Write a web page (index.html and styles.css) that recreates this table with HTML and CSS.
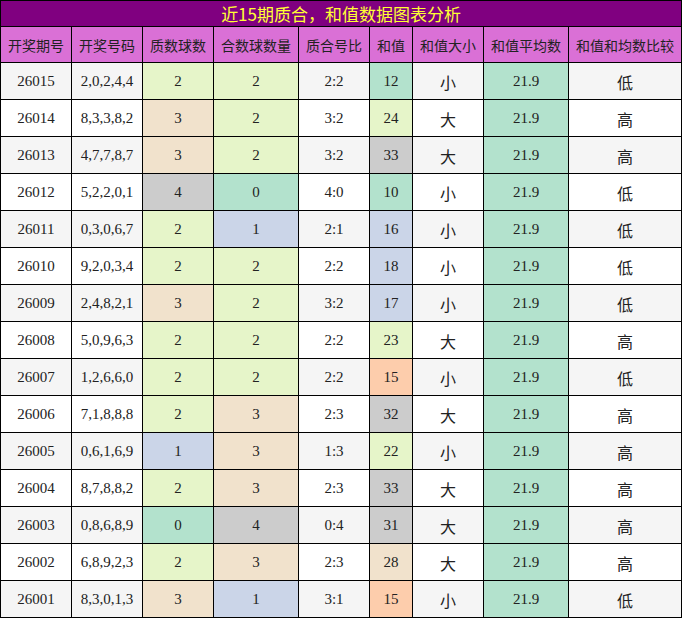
FILE: index.html
```html
<!DOCTYPE html>
<html lang="zh">
<head>
<meta charset="utf-8">
<link rel="stylesheet" href="styles.css">
</head>
<body>
<table class="tbl">
  <colgroup>
    <col class="w71"><col class="w71"><col class="w71"><col class="w85"><col class="w71"><col class="w43"><col class="w71"><col class="w85"><col class="w113">
  </colgroup>
  <thead>
    <tr class="title"><th colspan="9">近15期质合，和值数据图表分析</th></tr>
    <tr class="head">
      <th>开奖期号</th><th>开奖号码</th><th>质数球数</th><th>合数球数量</th><th>质合号比</th><th>和值</th><th>和值大小</th><th>和值平均数</th><th>和值和均数比较</th>
    </tr>
  </thead>
  <tbody>
    <tr class="odd"><td>26015</td><td>2,0,2,4,4</td><td class="c-green">2</td><td class="c-green">2</td><td>2:2</td><td class="c-mint">12</td><td class="cjk">小</td><td class="c-mint">21.9</td><td class="cjk">低</td></tr>
    <tr><td>26014</td><td>8,3,3,8,2</td><td class="c-tan">3</td><td class="c-green">2</td><td>3:2</td><td class="c-green">24</td><td class="cjk">大</td><td class="c-mint">21.9</td><td class="cjk">高</td></tr>
    <tr class="odd"><td>26013</td><td>4,7,7,8,7</td><td class="c-tan">3</td><td class="c-green">2</td><td>3:2</td><td class="c-gray">33</td><td class="cjk">大</td><td class="c-mint">21.9</td><td class="cjk">高</td></tr>
    <tr><td>26012</td><td>5,2,2,0,1</td><td class="c-gray">4</td><td class="c-mint">0</td><td>4:0</td><td class="c-mint">10</td><td class="cjk">小</td><td class="c-mint">21.9</td><td class="cjk">低</td></tr>
    <tr class="odd"><td>26011</td><td>0,3,0,6,7</td><td class="c-green">2</td><td class="c-blue">1</td><td>2:1</td><td class="c-blue">16</td><td class="cjk">小</td><td class="c-mint">21.9</td><td class="cjk">低</td></tr>
    <tr><td>26010</td><td>9,2,0,3,4</td><td class="c-green">2</td><td class="c-green">2</td><td>2:2</td><td class="c-blue">18</td><td class="cjk">小</td><td class="c-mint">21.9</td><td class="cjk">低</td></tr>
    <tr class="odd"><td>26009</td><td>2,4,8,2,1</td><td class="c-tan">3</td><td class="c-green">2</td><td>3:2</td><td class="c-blue">17</td><td class="cjk">小</td><td class="c-mint">21.9</td><td class="cjk">低</td></tr>
    <tr><td>26008</td><td>5,0,9,6,3</td><td class="c-green">2</td><td class="c-green">2</td><td>2:2</td><td class="c-green">23</td><td class="cjk">大</td><td class="c-mint">21.9</td><td class="cjk">高</td></tr>
    <tr class="odd"><td>26007</td><td>1,2,6,6,0</td><td class="c-green">2</td><td class="c-green">2</td><td>2:2</td><td class="c-peach">15</td><td class="cjk">小</td><td class="c-mint">21.9</td><td class="cjk">低</td></tr>
    <tr><td>26006</td><td>7,1,8,8,8</td><td class="c-green">2</td><td class="c-tan">3</td><td>2:3</td><td class="c-gray">32</td><td class="cjk">大</td><td class="c-mint">21.9</td><td class="cjk">高</td></tr>
    <tr class="odd"><td>26005</td><td>0,6,1,6,9</td><td class="c-blue">1</td><td class="c-tan">3</td><td>1:3</td><td class="c-green">22</td><td class="cjk">小</td><td class="c-mint">21.9</td><td class="cjk">高</td></tr>
    <tr><td>26004</td><td>8,7,8,8,2</td><td class="c-green">2</td><td class="c-tan">3</td><td>2:3</td><td class="c-gray">33</td><td class="cjk">大</td><td class="c-mint">21.9</td><td class="cjk">高</td></tr>
    <tr class="odd"><td>26003</td><td>0,8,6,8,9</td><td class="c-mint">0</td><td class="c-gray">4</td><td>0:4</td><td class="c-gray">31</td><td class="cjk">大</td><td class="c-mint">21.9</td><td class="cjk">高</td></tr>
    <tr><td>26002</td><td>6,8,9,2,3</td><td class="c-green">2</td><td class="c-tan">3</td><td>2:3</td><td class="c-tan">28</td><td class="cjk">大</td><td class="c-mint">21.9</td><td class="cjk">高</td></tr>
    <tr class="odd"><td>26001</td><td>8,3,0,1,3</td><td class="c-tan">3</td><td class="c-blue">1</td><td>3:1</td><td class="c-peach">15</td><td class="cjk">小</td><td class="c-mint">21.9</td><td class="cjk">低</td></tr>
  </tbody>
</table>
</body>
</html>
```
FILE: styles.css
```css
html, body {
  margin: 0;
  padding: 0;
  background: #ffffff;
}
.tbl {
  border-collapse: collapse;
  table-layout: fixed;
  width: 682px;
  font-family: "Liberation Serif", "Noto Sans CJK SC", serif;
  font-size: 15px;
  color: #222222;
}
.w71 { width: 71px; }
.w85 { width: 85px; }
.w43 { width: 43px; }
.w113 { width: 113px; }
.tbl th, .tbl td {
  border: 1px solid #000000;
  padding: 0;
  text-align: center;
  vertical-align: middle;
  font-weight: normal;
}
.title th {
  background: #800080;
  color: #ffff33;
  font-family: "Noto Sans CJK SC", sans-serif;
  font-size: 17px;
  height: 25px;
  line-height: 25px;
}
.head th {
  background: #da70d6;
  color: #222222;
  font-family: "Noto Sans CJK SC", sans-serif;
  font-size: 14px;
  height: 35px;
}
.tbl td {
  height: 36px;
  background: #ffffff;
}
.tbl tr.odd td {
  background: #f5f5f5;
}
.tbl td.cjk {
  font-family: "Noto Sans CJK SC", sans-serif;
  font-size: 16px;
  padding-top: 2px;
  height: 34px;
}
.tbl tr td.c-green { background: #e6f5c9; }
.tbl tr td.c-tan { background: #f1e2cc; }
.tbl tr td.c-gray { background: #cccccc; }
.tbl tr td.c-mint { background: #b3e2cd; }
.tbl tr td.c-blue { background: #cbd5e8; }
.tbl tr td.c-peach { background: #fdcdac; }
```
